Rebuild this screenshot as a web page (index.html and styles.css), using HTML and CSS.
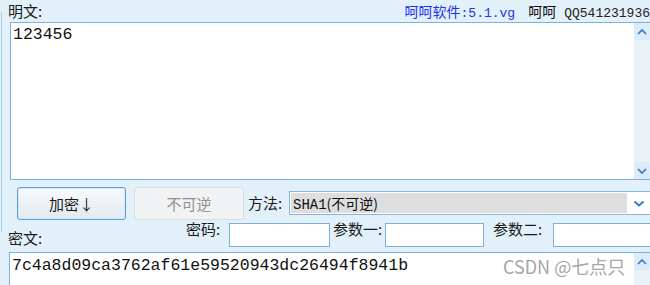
FILE: index.html
```html
<!DOCTYPE html>
<html lang="zh-CN">
<head>
<meta charset="utf-8">
<title>呵呵软件</title>
<link rel="stylesheet" href="styles.css">
</head>
<body>
<div class="app">
  <div class="header">
    <span class="label head-label">明文:</span>
    <span class="brand">
      <span class="brand-blue">呵呵软件<span class="mono brand-ver">:5.1.vg</span></span>
      <span class="brand-name">呵呵</span>
      <span class="mono brand-qq">QQ541231936</span>
    </span>
  </div>

  <div class="box plain">
    <div class="box-text">123456</div>
    <div class="scroll">
      <span class="sb-btn"><svg width="16" height="16" viewBox="0 0 16 16"><polyline points="4,10 8,6 12,10" fill="none" stroke="#2f7bd0" stroke-width="1.7"/></svg></span>
      <span class="sb-track"></span>
      <span class="sb-btn"><svg width="16" height="16" viewBox="0 0 16 16"><polyline points="4,6 8,10 12,6" fill="none" stroke="#2f7bd0" stroke-width="1.7"/></svg></span>
    </div>
  </div>

  <div class="row ops">
    <button class="btn btn-primary">加密↓</button>
    <button class="btn btn-disabled">不可逆</button>
    <span class="label method-label">方法:</span>
    <div class="select">
      <span class="select-val"><span class="mono">SHA1</span>(不可逆)</span>
      <span class="select-arrow"><svg width="14" height="10" viewBox="0 0 14 10"><polyline points="2.5,2.5 7,6.5 11.5,2.5" fill="none" stroke="#2a78d0" stroke-width="1.8"/></svg></span>
    </div>
  </div>

  <div class="row params">
    <span class="label cipher-label">密文:</span>
    <span class="label plabel pl-pwd">密码:</span>
    <span class="input in-pwd"></span>
    <span class="label plabel pl-p1">参数一:</span>
    <span class="input in-p1"></span>
    <span class="label plabel pl-p2">参数二:</span>
    <span class="input in-p2"></span>
  </div>

  <div class="box cipher">
    <div class="box-text cipher-text">7c4a8d09ca3762af61e59520943dc26494f8941b</div>
    <div class="scroll">
      <span class="sb-btn"><svg width="16" height="16" viewBox="0 0 16 16"><polyline points="4,10 8,6 12,10" fill="none" stroke="#2f7bd0" stroke-width="1.7"/></svg></span>
      <span class="sb-track"></span>
    </div>
  </div>

  <div class="watermark">CSDN @七点只</div>
</div>
</body>
</html>
```

FILE: styles.css
```css
* { box-sizing: border-box; }

html, body {
  margin: 0;
  padding: 0;
}

body {
  width: 650px;
  height: 285px;
  overflow: hidden;
  background:
    linear-gradient(#a8cfe8, #a8cfe8) 1px 12px / 1px 220px no-repeat,
    #e2f0f9;
  font-family: "Noto Sans CJK SC", "Noto Sans", sans-serif;
  color: #1a1a1a;
}

.app {
  position: relative;
  width: 650px;
  height: 285px;
  overflow: hidden;
}

.mono {
  font-family: "Liberation Mono", "Noto Sans CJK SC", monospace;
}

.label {
  font-size: 15px;
  line-height: 20px;
  white-space: nowrap;
}

/* header */
.header {
  height: 22px;
  display: flex;
  align-items: flex-start;
  padding-left: 8px;
}

.head-label {
  line-height: 22px;
}

.brand {
  margin-left: auto;
  display: flex;
  align-items: baseline;
  white-space: nowrap;
  line-height: 22px;
  font-size: 14px;
}

.brand-blue {
  color: #1f30ee;
}

.brand-ver {
  font-size: 13px;
}

.brand-name {
  margin-left: 13px;
  color: #111;
}

.brand-qq {
  margin-left: 8px;
  font-size: 13px;
  color: #222;
}

/* text boxes */
.box {
  display: flex;
  background: #fff;
  border: 1px solid #7ab2e2;
  border-right: none;
}

.plain {
  margin-left: 10px;
  height: 158px;
}

.box-text {
  flex: 1;
  font-family: "Liberation Mono", monospace;
  font-size: 16.5px;
  line-height: 19px;
  color: #111;
  padding: 2px 2px;
  white-space: nowrap;
}

.scroll {
  width: 16px;
  display: flex;
  flex-direction: column;
  background: #eaf2f8;
}

.sb-btn {
  height: 17px;
  display: flex;
  align-items: center;
  justify-content: center;
  background: #dcebf7;
}

.sb-track {
  flex: 1;
}

/* operation row */
.row {
  display: flex;
}

.ops {
  margin-top: 6px;
  height: 34px;
  align-items: center;
  padding-left: 17px;
}

.btn {
  height: 33px;
  font-family: "Noto Sans CJK SC", sans-serif;
  font-size: 15px;
  border-radius: 3px;
  padding: 0;
}

.btn-primary {
  width: 109px;
  border: 1px solid #5b9fd6;
  background: linear-gradient(#f8fafc, #e2e9ef);
  box-shadow: inset 0 0 0 1px #d4e7f6;
  color: #1a1a1a;
}

.btn-disabled {
  width: 110px;
  margin-left: 8px;
  border: 1px solid #d8dde1;
  background: #f0f2f4;
  color: #909090;
}

.method-label {
  margin-left: 4px;
  width: 37px;
}

.select {
  flex: 1;
  height: 24px;
  margin-left: 4px;
  display: flex;
  align-items: stretch;
  background: #fff;
  border: 1px solid #84b6e0;
  border-right: none;
  padding: 1px 0 1px 1px;
}

.select-val {
  flex: 1;
  background: #dedede;
  font-size: 14px;
  line-height: 20px;
  padding-left: 2px;
  color: #111;
  white-space: nowrap;
}

.select-arrow {
  width: 23px;
  display: flex;
  align-items: center;
  justify-content: center;
  padding-top: 1px;
}

/* params row */
.params {
  height: 32px;
  align-items: flex-start;
  padding-left: 8px;
}

.cipher-label {
  width: 178px;
  margin-top: 8px;
}

.plabel {
  margin-top: -1px;
}

.pl-pwd { width: 40px; }
.pl-p1 { width: 50px; margin-left: 3px; }
.pl-p2 { width: 56px; margin-left: 9px; }

.input {
  height: 24px;
  margin-top: 3px;
  background: #fff;
  border: 1px solid #79b0de;
}

.in-pwd { width: 101px; margin-left: 3px; }
.in-p1 { width: 99px; margin-left: 2px; }
.in-p2 { flex: 1; margin-left: 4px; border-right: none; }

/* cipher box */
.cipher {
  margin-left: 9px;
  height: 40px;
}

.cipher-text {
  padding-top: 3px;
}

.watermark {
  position: absolute;
  left: 503px;
  top: 254px;
  font-family: "Noto Sans CJK SC", "Noto Sans", sans-serif;
  font-size: 18px;
  line-height: 24px;
  color: #a6a6a6;
  white-space: nowrap;
}
```
